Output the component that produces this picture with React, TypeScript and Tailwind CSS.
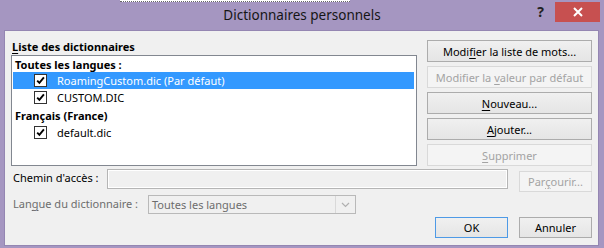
import React from 'react';

const ui = "font-['Noto_Sans',sans-serif]";

const Key = ({ children }: { children: React.ReactNode }) => (
  <span className="underline decoration-1 underline-offset-[2px]">{children}</span>
);

interface BtnProps {
  children: React.ReactNode;
  disabled?: boolean;
  primary?: boolean;
  className?: string;
}

const Btn: React.FC<BtnProps> = ({ children, disabled, primary, className = '' }) => {
  let look = 'border-[#acacac] bg-linear-to-b from-[#f0f0f0] to-[#e5e5e5] text-black';
  if (disabled) look = 'border-[#d9d9d9] bg-[#f4f4f4] text-[#a3a3a3]';
  if (primary) look = 'border-[#4e9ae6] bg-linear-to-b from-[#f0f0f0] to-[#e5e5e5] text-black';
  return (
    <div className={`flex items-center justify-center border text-[11px] leading-[15px] ${look} ${className}`}>
      <span className="whitespace-pre">{children}</span>
    </div>
  );
};

const Check = () => (
  <div className="w-[13px] h-[13px] border border-[#333333] bg-white flex items-center justify-center shrink-0">
    <svg width="9" height="9" viewBox="0 0 9 9">
      <path d="M1.2 4.6 L3.4 6.9 L7.9 1.4" stroke="#000" strokeWidth="1.9" fill="none" />
    </svg>
  </div>
);

const Row = ({ label, selected }: { label: string; selected?: boolean }) => (
  <div
    className={`h-[17px] ml-[1px] mr-[2px] flex items-center pl-[21px] gap-[10px] leading-[15px] ${
      selected ? 'bg-[#3399ff] text-white' : 'text-black'
    }`}
  >
    <Check />
    <span>{label}</span>
  </div>
);

const App: React.FC = () => {
  const buttons: { node: React.ReactNode; disabled?: boolean }[] = [
    { node: <>Modi<Key>f</Key>ier la liste de mots...</> },
    { node: <>Modifier la <Key>v</Key>aleur par défaut</>, disabled: true },
    { node: <><Key>N</Key>ouveau...</> },
    { node: <><Key>A</Key>jouter...</> },
    { node: <><Key>S</Key>upprimer</>, disabled: true },
  ];

  return (
    <div className={`w-[604px] h-[248px] bg-[#a596c1] overflow-hidden text-[11px] ${ui}`}>
      {/* bit of the window behind */}
      <div className="h-[2px] flex">
        <div className="ml-[120px] w-[230px] bg-white border-b border-dotted border-[#666666]" />
      </div>

      {/* title bar */}
      <div className="h-[28px] grid grid-cols-[1fr_auto_1fr]">
        <div />
        <div className="pt-[4px] text-[13.5px] leading-[18px] text-[#151515]">Dictionnaires personnels</div>
        <div className="flex justify-end items-start">
          <span className="mt-[1px] text-[14px] leading-[18px] font-bold text-[#222222]">?</span>
          <div className="ml-[11px] mr-[4px] w-[45px] h-[20px] bg-[#c75050] flex items-center justify-center">
            <svg width="10" height="10" viewBox="0 0 10 10">
              <path d="M1 1 L9 9 M9 1 L1 9" stroke="#fff" strokeWidth="2" />
            </svg>
          </div>
        </div>
      </div>

      {/* client area */}
      <div className="ml-[4px] w-[595px] h-[216px] border border-[#9486b2] bg-[#f0f0f0] px-[6px] pt-[8px] flex flex-col">
        <div className="flex gap-[10px]">
          <div className="w-[406px] flex flex-col">
            <div className="h-[15px] leading-[15px] pl-[1px] font-bold">
              <Key>L</Key>iste des dictionnaires
            </div>
            <div className="mt-[1px] h-[111px] border border-[#828790] bg-white pt-[1px]">
              <div className="h-[15px] leading-[15px] pl-[3px] font-bold">Toutes les langues :</div>
              <Row label="RoamingCustom.dic (Par défaut)" selected />
              <Row label="CUSTOM.DIC" />
              <div className="h-[18px] pt-[2px] leading-[15px] pl-[3px] font-bold">Français (France)</div>
              <Row label="default.dic" />
            </div>
          </div>
          <div className="w-[165px] pt-[1px] flex flex-col gap-[4px]">
            {buttons.map((b, i) => (
              <Btn key={i} disabled={b.disabled} className="h-[22px]">
                {b.node}
              </Btn>
            ))}
          </div>
        </div>

        {/* path */}
        <div className="mt-[3px] h-[23px] flex items-start">
          <div className="w-[96px] pl-[2px] leading-[15px] pt-[1px]">Chemin d'accès :</div>
          <div className="w-[401px] h-[20px] border border-[#b5b5b5] bg-[#f0f0f0] shadow-[inset_0_0_0_1px_#ffffff]" />
          <Btn disabled className="ml-[11px] mt-[2px] w-[73px] h-[21px]">
            Par<Key>ç</Key>ourir...
          </Btn>
        </div>

        {/* language */}
        <div className="mt-[3px] flex items-start">
          <div className="w-[137px] pl-[2px] pt-[1px] leading-[15px] text-[#6d6d6d]">
            Lan<Key>g</Key>ue du dictionnaire :
          </div>
          <div className="w-[208px] h-[19px] border border-[#b9b9b9] bg-[#f0f0f0] flex">
            <div className="flex-1 pl-[3px] leading-[17px] text-[#6d6d6d]">Toutes les langues</div>
            <div className="w-[20px] border-l border-[#d9d9d9] flex items-center justify-center">
              <svg width="9" height="6" viewBox="0 0 9 6">
                <path d="M1 1 L4.5 4.5 L8 1" stroke="#b0b0b0" strokeWidth="1.2" fill="none" />
              </svg>
            </div>
          </div>
        </div>

        {/* dialog buttons */}
        <div className="mt-[3px] flex justify-end gap-[11px]">
          <Btn primary className="w-[73px] h-[21px]">OK</Btn>
          <Btn className="w-[73px] h-[21px]">Annuler</Btn>
        </div>
      </div>
    </div>
  );
};

export default App;
